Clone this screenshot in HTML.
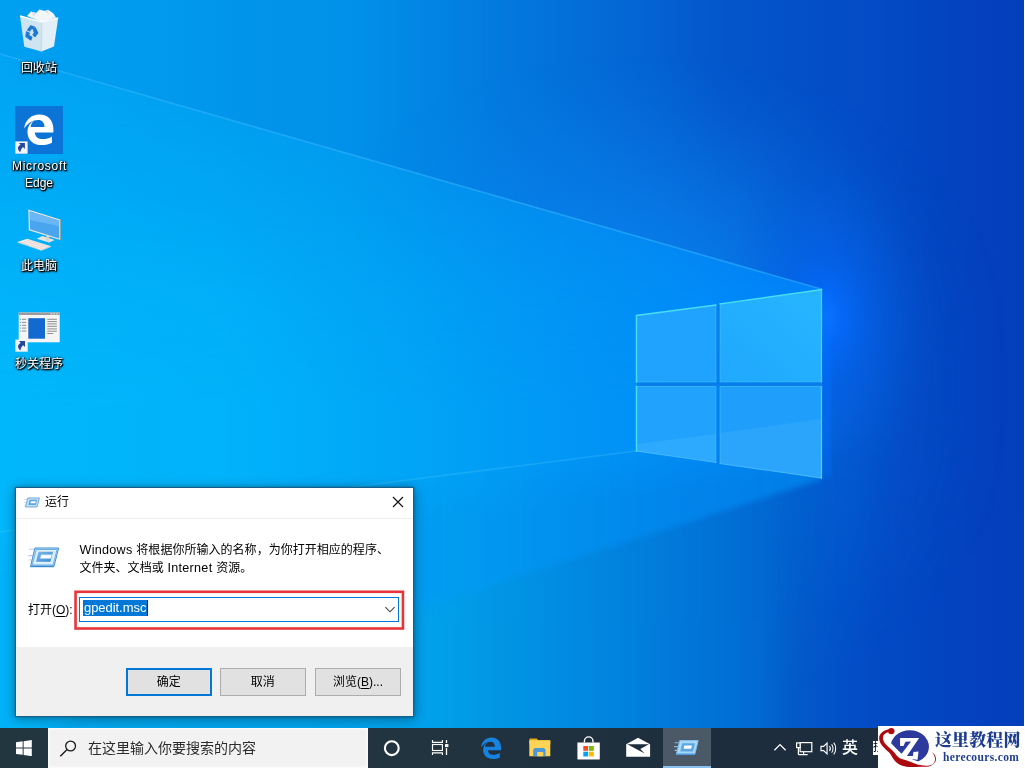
<!DOCTYPE html>
<html lang="zh-CN">
<head>
<meta charset="utf-8">
<title>运行 - gpedit.msc</title>
<style>
*{box-sizing:border-box;margin:0;padding:0}
html,body{width:1025px;height:769px;overflow:hidden;background:#fff}
body{position:relative;font-family:"Liberation Sans","Noto Sans CJK SC",sans-serif;font-size:12px;color:#000}
#desk{will-change:transform;opacity:.999;position:absolute;left:0;top:0;width:1024px;height:768px;overflow:hidden;background:#0a8bea}
#wall{position:absolute;left:0;top:0;width:1024px;height:768px;display:block}
/* desktop icons */
.ico{position:absolute;width:76px;text-align:center;color:#fff;font-size:12px;line-height:17px;
 text-shadow:1px 1px 1.500px rgba(0,0,0,1),0 1px 2px rgba(0,0,0,.95),0 0 3px rgba(0,0,0,.85),1px 1px 1px rgba(0,0,0,.8)}
.ico svg{display:block;position:absolute}
.ico span{position:absolute;left:0;width:76px;display:block;white-space:nowrap}
.btn{position:absolute;top:180px;height:27.500px;border:1px solid #adadad;background:#e1e1e1;text-align:center;font-size:12px;line-height:26px;white-space:nowrap;color:#000}
.lt{font-size:12.600px;letter-spacing:.280px}
</style>
</head>
<body>
<div id="desk">
<svg id="wall" width="1024" height="768" viewBox="0 0 1024 768">
<defs>
  <!-- ambient (outside the light wedge), far-from-window values -->
  <linearGradient id="gTop" x1="0" y1="0" x2="1024" y2="0" gradientUnits="userSpaceOnUse">
    <stop offset="0" stop-color="#00a0f1"/>
    <stop offset="0.117" stop-color="#009cef"/>
    <stop offset="0.25" stop-color="#0094eb"/>
    <stop offset="0.342" stop-color="#0091ea"/>
    <stop offset="0.49" stop-color="#0379de"/>
    <stop offset="0.635" stop-color="#0463d2"/>
    <stop offset="0.71" stop-color="#0455ca"/>
    <stop offset="0.83" stop-color="#034dc7"/>
    <stop offset="0.955" stop-color="#0441be"/>
    <stop offset="1" stop-color="#043fbb"/>
  </linearGradient>
  <!-- ambient, lower part (floor outside the wedge) -->
  <linearGradient id="gBot" x1="0" y1="0" x2="1024" y2="0" gradientUnits="userSpaceOnUse">
    <stop offset="0" stop-color="#00a8ee"/>
    <stop offset="0.35" stop-color="#00a3ec"/>
    <stop offset="0.43" stop-color="#00a0eb"/>
    <stop offset="0.49" stop-color="#0095e4"/>
    <stop offset="0.585" stop-color="#0086e0"/>
    <stop offset="0.685" stop-color="#0074d8"/>
    <stop offset="0.742" stop-color="#006ad2"/>
    <stop offset="0.78" stop-color="#035dc8"/>
    <stop offset="0.83" stop-color="#0355ca"/>
    <stop offset="0.94" stop-color="#0442ba"/>
    <stop offset="1" stop-color="#043fb8"/>
  </linearGradient>
  <!-- broad glow around the window -->
  <radialGradient id="gBroad" cx="0" cy="0" r="1" gradientUnits="userSpaceOnUse" gradientTransform="translate(640 385) scale(400 330)">
    <stop offset="0" stop-color="#0a8cf6" stop-opacity="0.78"/>
    <stop offset="0.3" stop-color="#0a8cf6" stop-opacity="0.70"/>
    <stop offset="0.5" stop-color="#0a8cf6" stop-opacity="0.52"/>
    <stop offset="0.7" stop-color="#0a8cf6" stop-opacity="0.28"/>
    <stop offset="0.85" stop-color="#0a8cf6" stop-opacity="0.11"/>
    <stop offset="1" stop-color="#0a8cf6" stop-opacity="0"/>
  </radialGradient>
  <linearGradient id="gBroadMaskG" x1="0" y1="0" x2="1024" y2="0" gradientUnits="userSpaceOnUse">
    <stop offset="0" stop-color="#fff"/>
    <stop offset="0.72" stop-color="#fff"/>
    <stop offset="0.88" stop-color="#404040"/>
    <stop offset="1" stop-color="#000"/>
  </linearGradient>
  <mask id="mBroad"><rect width="1024" height="768" fill="url(#gBroadMaskG)"/></mask>
  <!-- light wedge -->
  <linearGradient id="gWedge" x1="0" y1="0" x2="1024" y2="0" gradientUnits="userSpaceOnUse">
    <stop offset="0" stop-color="#00b7fb"/>
    <stop offset="0.215" stop-color="#00b3fa"/>
    <stop offset="0.40" stop-color="#00a5f7"/>
    <stop offset="0.49" stop-color="#009cf5"/>
    <stop offset="0.585" stop-color="#0094f6"/>
    <stop offset="0.70" stop-color="#008cfb"/>
    <stop offset="0.80" stop-color="#0688fd"/>
  </linearGradient>
  <!-- wedge opacity grows from its upper edge downward -->
  <linearGradient id="gWedgeMaskG" x1="0" y1="0" x2="0" y2="768" gradientUnits="userSpaceOnUse">
    <stop offset="0.07" stop-color="#262626"/>
    <stop offset="0.26" stop-color="#8c8c8c"/>
    <stop offset="0.39" stop-color="#d9d9d9"/>
    <stop offset="0.53" stop-color="#fff"/>
    <stop offset="1" stop-color="#fff"/>
  </linearGradient>
  <mask id="mWedge"><rect width="1024" height="768" fill="url(#gWedgeMaskG)"/></mask>
  <!-- floor (lower part of the wedge) shading -->
  <linearGradient id="gFloor" x1="0" y1="0" x2="1024" y2="0" gradientUnits="userSpaceOnUse">
    <stop offset="0" stop-color="#0070c8" stop-opacity="0.04"/>
    <stop offset="0.47" stop-color="#0070c8" stop-opacity="0.10"/>
    <stop offset="0.585" stop-color="#0070c8" stop-opacity="0.20"/>
    <stop offset="0.72" stop-color="#0070c8" stop-opacity="0.36"/>
    <stop offset="0.80" stop-color="#0070c8" stop-opacity="0.42"/>
  </linearGradient>
  <radialGradient id="gGlow" cx="0" cy="0" r="1" gradientUnits="userSpaceOnUse" gradientTransform="translate(826 318) scale(112 175)">
    <stop offset="0" stop-color="#0c74ff" stop-opacity="1"/>
    <stop offset="0.15" stop-color="#0468f8" stop-opacity="0.92"/>
    <stop offset="0.4" stop-color="#0462ee" stop-opacity="0.52"/>
    <stop offset="0.7" stop-color="#0460e8" stop-opacity="0.2"/>
    <stop offset="1" stop-color="#0356dd" stop-opacity="0"/>
  </radialGradient>
  <linearGradient id="gBotMaskG" x1="0" y1="0" x2="1024" y2="0" gradientUnits="userSpaceOnUse">
    <stop offset="0" stop-color="#fff"/>
    <stop offset="0.74" stop-color="#fff"/>
    <stop offset="0.87" stop-color="#000"/>
  </linearGradient>
  <mask id="mBot"><rect width="1024" height="768" fill="url(#gBotMaskG)"/></mask>
  <clipPath id="cpLeft"><rect x="0" y="0" width="822" height="768"/></clipPath>
  <linearGradient id="gPaneTR" x1="0" y1="1" x2="1" y2="0"><stop offset="0" stop-color="#20a8fd"/><stop offset="1" stop-color="#27b5ff"/></linearGradient>
  <linearGradient id="gFloorMaskG" x1="318" y1="489" x2="324" y2="536" gradientUnits="userSpaceOnUse">
    <stop offset="0" stop-color="#303030"/>
    <stop offset="0.2" stop-color="#505050"/>
    <stop offset="1" stop-color="#fff"/>
  </linearGradient>
  <mask id="mFloor"><rect width="1024" height="768" fill="url(#gFloorMaskG)"/></mask>
  <filter id="b8" x="-5%" y="-5%" width="110%" height="110%"><feGaussianBlur stdDeviation="8"/></filter>
  <filter id="b3" x="-5%" y="-5%" width="110%" height="110%"><feGaussianBlur stdDeviation="3"/></filter>
  <filter id="b1"><feGaussianBlur stdDeviation="0.7"/></filter>
</defs>
<!-- ambient -->
<rect width="1024" height="768" fill="url(#gTop)"/>
<rect width="1024" height="768" fill="url(#gBroad)" mask="url(#mBroad)"/>
<!-- lower ambient -->
<g mask="url(#mBot)">
<polygon points="0,560 400,520 822,450 1024,450 1024,768 0,768" fill="url(#gBot)" filter="url(#b8)"/>
<rect x="0" y="620" width="1024" height="148" fill="url(#gBot)"/>
</g>
<!-- glow to the right of the window -->
<rect x="700" y="130" width="324" height="380" fill="url(#gGlow)"/>
<rect x="822" y="292" width="9" height="184" fill="#0a70ff" fill-opacity=".5" filter="url(#b3)"/>
<!-- light wedge -->
<g clip-path="url(#cpLeft)">
  <!-- floor part (soft lower edge) -->
  <polygon points="-20,470 640,400 840,420 840,472 -20,751" fill="url(#gWedge)" filter="url(#b3)"/>
  <g mask="url(#mFloor)"><polygon points="-20,470 640,400 840,420 840,472 -20,751" fill="url(#gFloor)" filter="url(#b3)"/></g>
  <!-- air part -->
  <g filter="url(#b1)">
    <polygon points="-2,53.400 822,289 822,478 636,451 -2,532" fill="url(#gWedge)" mask="url(#mWedge)"/>
  </g>
</g>
<!-- beam edge lines -->
<line x1="0" y1="54" x2="821" y2="289" stroke="#38b8ff" stroke-opacity="0.5" stroke-width="1.6" filter="url(#b1)"/>
<line x1="636" y1="451" x2="0" y2="532" stroke="#6ad4ff" stroke-opacity="0.22" stroke-width="1.6" filter="url(#b1)"/>
<!-- window panes -->
<g>
  <polygon points="636.5,315.5 716,305 716,382 636.5,382" fill="#20a3fe"/>
  <polygon points="720,304 821.5,289.5 821.5,382 720,382" fill="url(#gPaneTR)"/>
  <polygon points="636.5,386.5 716,386.5 716,462.5 636.5,451" fill="#20a2fd"/>
  <polygon points="720,386.5 821.5,386.5 821.5,478 720,463.5" fill="#1f9ffb"/>
</g>
<g fill="none" stroke-linecap="square">
  <!-- inner and bottom edges: soft -->
  <path d="M716 305V382H636.500M720 304V382H821.500M636.500 386.500H716V462.500M720 463.500V386.500H821.500" stroke="#4cc6f8" stroke-opacity=".55" stroke-width="1"/>
  <path d="M636.500 451L716 462.500M720 463.500L821.500 478" stroke="#62ccff" stroke-opacity=".6" stroke-width="1.200"/>
  <!-- outer bright edges -->
  <path d="M636.500 382V315.500L716 305M636.500 451V386.500M720 304L821.500 289.500" stroke="#48dcee" stroke-width="1.500"/>
  <path d="M821.500 289.500V382M821.500 386.500V478" stroke="#48dcee" stroke-opacity=".9" stroke-width="1.300"/>
</g>
<!-- darker gaps between panes -->
<rect x="637" y="382.600" width="184.500" height="3.400" fill="#0a7ce6" opacity="0.9"/>
<rect x="716.600" y="304" width="2.800" height="160" fill="#0a7ce6" opacity="0.6"/>
<!-- subtle highlight inside bottom panes -->
<polygon points="637,444 716,434 716,462 637,451" fill="#6fd0ff" fill-opacity="0.17"/>
<polygon points="720,433 821,419 821,478 720,463" fill="#6fd0ff" fill-opacity="0.14"/>
</svg>

<!-- Recycle bin -->
<div class="ico" style="left:1px;top:0;height:80px">
  <svg style="left:17px;top:7px" width="44" height="46" viewBox="0 0 44 46">
    <!-- crumpled paper -->
    <path d="M9 9L13 4.500 18 6 21.500 2.500 27 4 30 2.800 35 6 38 10.500 24 15z" fill="#f3f6f9"/>
    <path d="M13 4.500L18 6 16 10zM27 4L30 2.800 31 8z" fill="#d9e2ea"/>
    <!-- left face -->
    <path d="M2 9L24 15 23.500 44.500 6.300 39.800z" fill="#dfe9f1" fill-opacity=".93"/>
    <!-- right face -->
    <path d="M24 15L40.200 10.800 36 39.500 23.500 44.500z" fill="#eef3f7" fill-opacity=".95"/>
    <!-- rim -->
    <path d="M2 9L24 15 40.200 10.800" fill="none" stroke="#fbfdff" stroke-width="1.300"/>
    <path d="M24 15L23.500 44.500" stroke="#cfdbe5" stroke-width=".800"/>
    <!-- recycle symbol -->
    <g fill="#1b78d3" stroke="#1b78d3" stroke-width="1" stroke-linejoin="round" transform="translate(13.300 25.800) scale(1.050)">
      <path d="M-3.600 -2.600L-0.600 -6.600 3 -5.600 1.800 -3.600 0 -4.200 -1.400 -1.600z"/>
      <path d="M3.800 -4.800L6.200 0.200 3.600 3.600 1.600 2 3 0 2 -2.600z"/>
      <path d="M-4.600 -1L-1.800 .400 -2.600 2.200 .600 4.200 -.400 6.800 -5.200 3.600z"/>
    </g>
  </svg>
  <span style="top:59.500px">回收站</span>
</div>
<!-- Microsoft Edge -->
<div class="ico" style="left:1px;top:100px;height:95px">
  <svg style="left:14px;top:6px" width="48" height="48" viewBox="0 0 48 48">
    <rect width="48" height="48" fill="#0b74d6"/>
    <path d="M9.200 22.600C10.200 13.800 16.600 8.600 24.400 8.600c8.600 0 14 6 14 14.800v3H19.800c.300 4.300 3.500 6.700 8 6.700 3.300 0 6.400-.900 9.200-2.700v6.300c-2.900 1.600-6.300 2.400-10.200 2.400-8.700 0-14.300-5.200-14.300-13.200 0-4.900 2.500-9.200 6.700-11.600-2.100 1.800-3.300 4.400-3.600 6.800h13.900c0-4.500-2.300-7.200-6.300-7.200-5.400 0-10.700 3.300-14 8.700z" fill="#fff"/>
    <!-- shortcut overlay -->
    <g transform="translate(.300 35.400)"><rect width="12.300" height="12.300" fill="#f3f6f9"/>
    <path d="M3.600 1.500H9.600V7.500L7.700 5.700C6.300 7 5.400 8.600 5 10.900 3.400 9.600 2.400 8 2.700 6.400 3 4.900 4 3.800 5.300 3.300z" fill="#27479c"/></g>
  </svg>
  <span style="top:57.500px;letter-spacing:.700px;left:.500px">Microsoft</span>
  <span style="top:75px">Edge</span>
</div>
<!-- This PC -->
<div class="ico" style="left:1px;top:200px;height:80px">
  <svg style="left:15px;top:8px" width="46" height="44" viewBox="0 0 46 44">
    <!-- keyboard -->
    <path d="M1.400 34.100L11.200 30.700 35.200 38.300 25.300 42.300z" fill="#f3f0ee"/>
    <path d="M4.600 34.200L28.600 41.200M7.800 33L31.800 40M11 31.900L34 39" stroke="#e3c9c4" stroke-width=".700" fill="none"/>
    <path d="M1.400 34.100L25.300 42.300 35.200 38.300" stroke="#cfd6dc" stroke-width=".800" fill="none"/>
    <!-- stand -->
    <path d="M20.600 30.700L26.300 27.900 38.800 32 33.100 34.500z" fill="#e7e3df"/>
    <path d="M30.600 26.500L33.400 27.400 32.600 33.200 30 32.300z" fill="#d9d2cc"/>
    <!-- monitor frame -->
    <path d="M12.300 1.400L44.200 11.500V32.100L12.800 22.300z" fill="#e9e4de"/>
    <path d="M44.200 11.500V32.100" stroke="#b9a58f" stroke-width="1"/>
    <!-- screen -->
    <path d="M13.600 3.200L43 12.500V30.400L14 21.300z" fill="#4aa5ef"/>
    <path d="M13.600 3.200L43 12.500V18L13.800 12z" fill="#74bdf6" fill-opacity=".75"/>
  </svg>
  <span style="top:57.500px">此电脑</span>
</div>
<!-- 秒关程序 -->
<div class="ico" style="left:1px;top:300px;height:80px">
  <svg style="left:14px;top:12px" width="48" height="41" viewBox="0 0 48 41">
    <rect x="3.700" y=".500" width="41" height="29.800" fill="#f5f5f5"/>
    <rect x="3.700" y=".500" width="41" height="2.500" fill="#9b9b9b"/>
    <rect x="35.500" y="1.200" width="1.600" height="1.200" fill="#e0e0e0"/><rect x="38.400" y="1.200" width="1.600" height="1.200" fill="#e0e0e0"/><rect x="41.300" y="1.200" width="1.600" height="1.200" fill="#e0e0e0"/>
    <rect x="13.300" y="6.200" width="16.700" height="20.500" fill="#1469d0"/>
    <path d="M32.300 7.300H41.900M32.300 9.600H41.900M32.300 11.900H41.900M32.300 14.300H41.900M32.300 16.900H41.900M32.300 19.200H41.900M32.300 21.500H38.200" stroke="#8e8e8e" stroke-width="1"/>
    <path d="M6.900 7.300H11.200M6.900 10.400H11.200M6.900 13.300H11.200M6.900 16.100H11.200M6.900 19H11.200" stroke="#8e8e8e" stroke-width="1"/>
    <path d="M5.200 7.300H6M5.200 10.400H6M5.200 13.300H6M5.200 16.100H6M5.200 19H6" stroke="#5a7fb8" stroke-width="1"/>
    <!-- shortcut overlay -->
    <g transform="translate(.400 27.600)"><rect width="12.300" height="12.100" fill="#f3f6f9"/>
    <path d="M3.600 1.500H9.600V7.500L7.700 5.700C6.300 7 5.400 8.600 5 10.900 3.400 9.600 2.400 8 2.700 6.400 3 4.900 4 3.800 5.300 3.300z" fill="#27479c"/></g>
  </svg>
  <span style="top:56px">秒关程序</span>
</div>

<div id="dlg" style="position:absolute;left:15px;top:487px;width:399px;height:230px;border:1px solid #155f8a;background:#fff;box-shadow:0 2px 11px 1px rgba(0,0,0,.30),0 0 3px rgba(0,0,0,.28);">
  <!-- title bar -->
  <svg style="position:absolute;left:8px;top:8.500px" width="16.500" height="11.500" viewBox="0 0 17 12">
    <path d="M.400 2.600H3.200M0 5.800H2.400M.400 8.400H1.800" stroke="#bcd2e6" stroke-width=".800"/>
    <path d="M3.900 1H16L13.500 10.400H1.400z" fill="#c4e2f8" stroke="#5a9fdc" stroke-width=".900"/>
    <path d="M5.800 2.900H13.600L12.200 8.400H4.400z" fill="#5fa5e0"/>
    <path d="M7.200 4.400H12.200L11.600 6.600H6.600z" fill="#fff"/>
  </svg>
  <span style="position:absolute;left:29px;top:6px;font-size:12px;line-height:17px;white-space:nowrap">运行</span>
  <svg style="position:absolute;left:376px;top:8px" width="12" height="12" viewBox="0 0 12 12">
    <path d="M1 1L11 11M11 1L1 11" stroke="#111" stroke-width="1.150" fill="none"/>
  </svg>
  <div style="position:absolute;left:0;top:30px;width:397px;height:1px;background:#ededed"></div>
  <!-- big run icon -->
  <svg style="position:absolute;left:12px;top:58.500px" width="32" height="22" viewBox="0 0 32 22">
    <defs><linearGradient id="gRunIn" x1="0" y1="0" x2="1" y2="1"><stop offset="0" stop-color="#7db8ea"/><stop offset="1" stop-color="#3a88d4"/></linearGradient></defs>
    <path d="M.800 2.200H6.600M.200 8.600H4.800M.800 13H3.800" stroke="#b9cfe2" stroke-width="1.100"/>
    <path d="M6.930 1H30.640L25.960 19.450H2.540z" fill="#bfe0f8" stroke="#3f8fd6" stroke-width="1"/>
    <path d="M8.300 2.500H29L25 18H4.200z" fill="#dbeffc" stroke="#5aa2de" stroke-width=".800"/>
    <path d="M10.440 4.800H25.080L22.450 14.760H8z" fill="url(#gRunIn)"/>
    <path d="M13.200 7.700H23.800L22.700 11.600H12.200z" fill="#fff" stroke="#a8d0f0" stroke-width=".600"/>
    <path d="M2.540 19.450H25.960" stroke="#3a88d4" stroke-width="1.500"/>
  </svg>
  <!-- description -->
  <div style="position:absolute;left:63.500px;top:54.400px;width:325px;font-size:12px;line-height:17.600px;white-space:nowrap;color:#000;letter-spacing:.030px;word-spacing:.400px">
    <div><span class="lt">Windows</span> 将根据你所输入的名称，为你打开相应的程序、</div>
    <div>文件夹、文档或 <span class="lt">Internet</span> 资源。</div>
  </div>
  <!-- open label -->
  <span style="position:absolute;left:12px;top:114px;font-size:12px;line-height:17px;white-space:nowrap">打开(<span style="text-decoration:underline;text-underline-offset:1.500px">O</span>):</span>
  <!-- red highlight -->
  <svg style="position:absolute;left:57px;top:101px" width="334" height="43" viewBox="0 0 334 43"><rect x="2.550" y="2.800" width="327.400" height="36.700" fill="none" stroke="#e8353b" stroke-width="2.600"/></svg>
  <!-- combobox -->
  <div style="position:absolute;left:63px;top:109px;width:319.500px;height:24.500px;border:1px solid #0078d7;background:#fff">
    <span style="position:absolute;left:3px;top:2px;height:16.400px;padding:0 1px 0 1px;background:#0078d7;color:#fff;font-size:13px;line-height:16.400px;white-space:nowrap;letter-spacing:-0.050px;border-right:1px solid #222">gpedit.msc</span>
    <svg style="position:absolute;left:304px;top:7px" width="12" height="9" viewBox="0 0 12 9">
      <path d="M1.400 2.200L6 6.800 10.600 2.200" fill="none" stroke="#444" stroke-width="1.100"/>
    </svg>
  </div>
  <!-- footer -->
  <div style="position:absolute;left:0;top:159px;width:397px;height:69px;background:#f0f0f0"></div>
  <div class="btn" style="left:110px;width:85.500px;border:2px solid #0078d7;line-height:24px">确定</div>
  <div class="btn" style="left:204px;width:85.500px">取消</div>
  <div class="btn" style="left:299px;width:86px">浏览(<span style="text-decoration:underline;text-underline-offset:1.500px">B</span>)...</div>
</div>

<div id="taskbar" style="position:absolute;left:0;top:728px;width:1024px;height:40px;background:linear-gradient(90deg,#223640 0,#21343f 40%,#1d2d3d 70%,#1d2d3d 100%);">
  <!-- start -->
  <svg style="position:absolute;left:16px;top:12px" width="16.400" height="16.400" viewBox="0 0 17 17">
    <polygon points="0,2.3 6.9,1.3 6.9,7.9 0,7.9" fill="#fff"/>
    <polygon points="7.9,1.2 16.4,0 16.4,7.9 7.9,7.9" fill="#fff"/>
    <polygon points="0,8.9 6.9,8.9 6.9,15.4 0,14.4" fill="#fff"/>
    <polygon points="7.9,8.9 16.4,8.9 16.4,16.8 7.9,15.6" fill="#fff"/>
  </svg>
  <!-- search box -->
  <div style="position:absolute;left:48px;top:0;width:320px;height:40px;background:#f2f2f2;box-shadow:inset 0 0 0 1.500px #fafafa;">
    <svg style="position:absolute;left:10px;top:10px" width="22" height="22" viewBox="0 0 22 22">
      <circle cx="12.6" cy="8" r="4.9" fill="none" stroke="#1a1a1a" stroke-width="1.3"/>
      <line x1="9.1" y1="11.6" x2="2.3" y2="18.3" stroke="#1a1a1a" stroke-width="1.4"/>
    </svg>
    <span style="position:absolute;left:40px;top:10px;font-size:14px;line-height:20px;color:#2b2b2b;white-space:nowrap;letter-spacing:0px">在这里输入你要搜索的内容</span>
  </div>
  <!-- cortana -->
  <svg style="position:absolute;left:381px;top:9px" width="22" height="22" viewBox="0 0 22 22">
    <circle cx="10.8" cy="11.2" r="6.9" fill="none" stroke="#fff" stroke-width="2.1"/>
  </svg>
  <!-- task view -->
  <svg style="position:absolute;left:430px;top:10px" width="20" height="20" viewBox="0 0 20 20" fill="none" stroke="#fff" stroke-width="1.150">
    <path d="M2.500 2.100V4.400H12.400V2.100"/>
    <rect x="2.500" y="6.500" width="9.900" height="6"/>
    <path d="M2.500 17.100V14.900H12.400V17.100"/>
    <path d="M16.500 2.100V4.900M16.500 10V17.100" stroke-width="1.300"/>
    <rect x="15" y="6.100" width="3.400" height="3" fill="#fff" stroke="none"/>
  </svg>
  <!-- edge -->
  <svg style="position:absolute;left:479px;top:8px" width="24" height="24" viewBox="0 0 24 24">
    <path d="M2 11.6C2.6 5.6 7 1.6 12.5 1.6c5.8 0 9.6 4.200 9.6 10.200v2.400H9c.1 2.900 2.300 4.700 5.500 4.700 2.300 0 4.400-.600 6.300-1.800v4.300c-2 1.100-4.300 1.600-6.900 1.600-5.800 0-9.800-3.600-9.800-9.200 0-3.300 1.600-6.200 4.500-7.800-1.500 1.300-2.300 3.100-2.500 4.700h9.800c0-3.100-1.600-5-4.400-5-3.700 0-7.300 2.300-9.500 5.900z" fill="#1683e3"/>
  </svg>
  <!-- explorer -->
  <svg style="position:absolute;left:528px;top:9px" width="24" height="22" viewBox="0 0 24 22">
    <path d="M1.300 2.500c0-.500.400-.900.900-.900h6.600l1.400 1.600h12.100v4H1.300z" fill="#e6a817"/>
    <path d="M1.300 4.200c0-.500.400-.900.900-.900h19.200c.500 0 .900.400.900.900v15H1.300z" fill="#ffd356"/>
    <path d="M5.200 13.200c0-1.200 1-2.200 2.200-2.200h7.900c1.200 0 2.200 1 2.200 2.200v6H5.200z" fill="#4a97dc"/>
    <path d="M9.200 15.800c0-.500.400-.900.900-.900h4.300c.500 0 .900.400.900.900v3.400H9.200z" fill="#ffd356"/>
  </svg>
  <!-- store -->
  <svg style="position:absolute;left:576px;top:7px" width="26" height="26" viewBox="0 0 26 26">
    <path d="M8.400 7.600V6.200a4.300 4.300 0 0 1 8.600 0v1.400" fill="none" stroke="#fff" stroke-width="1.400"/>
    <path d="M1.400 7.400h22.400v16.300c0 .500-.400.900-.900.900H2.300c-.500 0-.900-.400-.900-.900z" fill="#fff"/>
    <rect x="7.300" y="11" width="4.800" height="4.800" fill="#f25022"/>
    <rect x="13" y="11" width="4.800" height="4.800" fill="#7fba00"/>
    <rect x="7.300" y="16.700" width="4.800" height="4.800" fill="#00a4ef"/>
    <rect x="13" y="16.700" width="4.800" height="4.800" fill="#ffb900"/>
  </svg>
  <!-- mail -->
  <svg style="position:absolute;left:625px;top:8px" width="27" height="24" viewBox="0 0 27 24">
    <path d="M1.200 8.300L13.100 1.800 25.100 8.300V20.800H1.200z" fill="#fff"/>
    <path d="M2.300 8.200H23.900L15.300 13.100 19.700 17.600z" fill="#1d2d3d"/>
  </svg>
  <!-- run (active) -->
  <div style="position:absolute;left:663px;top:0;width:48px;height:40px;background:#4b5966"></div>
  <div style="position:absolute;left:663px;top:38px;width:48px;height:2px;background:#86c1f0"></div>
  <svg style="position:absolute;left:674px;top:11px" width="26" height="18" viewBox="0 0 26 18">
    <path d="M.600 3.800H5.200M0 7.600H4.200M.600 11.400H3.200" stroke="#8db4d6" stroke-width="1.100"/>
    <path d="M5.800 1.600H24.200L20.800 15.200H2.400z" fill="#a9d9f8" stroke="#7cc0f0" stroke-width="1"/>
    <path d="M8.200 4.200H21L19 12.400H6.200z" fill="#5ea6e2"/>
    <path d="M10.400 6.400H18L17.100 9.800H9.600z" fill="#fff"/>
    <path d="M2.400 15.200H20.800" stroke="#4f9be0" stroke-width="1.400"/>
  </svg>
  <!-- tray -->
  <svg style="position:absolute;left:772px;top:12.200px" width="16" height="14" viewBox="0 0 16 14">
    <path d="M2.400 10.200L8 4.600 13.600 10.200" fill="none" stroke="#fff" stroke-width="1.300"/>
  </svg>
  <svg style="position:absolute;left:795px;top:10px" width="20" height="20" viewBox="0 0 20 20" fill="none" stroke="#fff" stroke-width="1.200">
    <rect x="5.100" y="4.600" width="11.700" height="9.100"/>
    <path d="M8.600 13.700V16.600M3.400 16.600H12.700M3.400 9.600V16.600"/>
    <rect x="1.600" y="4.900" width="3.500" height="4.700" fill="#1d2d3d"/>
  </svg>
  <svg style="position:absolute;left:818px;top:10.500px" width="20" height="19" viewBox="0 0 20 20" fill="none" stroke="#fff" stroke-width="1.200">
    <path d="M2.600 7.800H5.400L9 4.400V15.600L5.400 12.200H2.600z"/>
    <path d="M11.600 7.400c1 1.400 1 3.800 0 5.200M13.800 5.600c2 2.400 2 6.400 0 8.800M16 3.800c2.800 3.400 2.800 9 0 12.400" stroke-width="1.100"/>
  </svg>
  <span style="position:absolute;left:842px;top:10px;font-size:16px;line-height:20px;color:#fff;font-weight:500">英</span>
  <span style="position:absolute;left:873px;top:13px;width:12px;height:13.500px;background:#fff;color:#000;font-size:12px;line-height:13px;overflow:hidden">拼</span>
</div>

<div id="wm" style="position:absolute;left:878px;top:726px;width:147px;height:43px;background:#fff;overflow:hidden">
  <svg style="position:absolute;left:0;top:0" width="62" height="43" viewBox="0 0 62 43">
    <defs><clipPath id="cpDisc"><polygon points="11.500,15.400 16.750,21 23,27.250 29.250,31 35.500,33.800 43,36.600 46,37.400 62,43 62,0 0,0 0,4"/></clipPath></defs>
    <!-- blue disc, cut on the lower-left along a diagonal -->
    <ellipse cx="31.750" cy="20.700" rx="19.200" ry="16.500" fill="#2d3a9d" clip-path="url(#cpDisc)"/>
    <!-- Z letter -->
    <polygon points="22.060,11.940 41.130,11.940 28.940,30.060 34.880,30.060 35.500,25.880 40.500,25.380 39.560,33.810 33,32.880 25.500,31 23,28.500 33,15.500 27.380,15.690 25.500,20.060 22.060,20.060" fill="#fff"/>
    <!-- red swoosh -->
    <circle cx="13.300" cy="5.100" r="3.200" fill="#ad0a10"/>
    <path d="M13.300 3C6 3.600 1.200 7 1.100 12.250 1.200 15 2.400 17.600 4.250 19.750 6.400 22.300 9 24.600 11.130 26.600 13.400 29.400 14.600 32.400 16.750 34.750 18.800 37 21.400 38.800 24.250 39.750 27 40.700 30 41 33 41 36 41.100 39 40.900 41.750 40.700 45 40.600 48.200 40.800 51.100 40.400 53.600 39.800 55.600 38.400 56.750 36.600 57.600 35.400 58 34.200 58 32.900 57.900 31 57.200 29.300 56.100 27.900 55.500 27.100 54.700 26.400 53.900 25.900 55.600 28 57.200 30.600 57.060 33.500 56.900 35.600 55.900 37.400 54.250 38.500 52.400 39.500 50.200 39.800 48 39.750 45 39.700 42 39.200 39.250 38.500 37.100 37.800 35 36.900 33 36 31.100 35.300 29.200 34.700 27.400 34.100 25.500 33.600 23.600 33.100 21.750 32.250 19.300 30.400 17.400 27.800 15.500 25.400 13 23 10.200 21 8 18.500 6.300 16.800 5.100 14.600 4.900 12.250 4.800 10.900 5.300 9.600 6.100 8.500 7.300 7.300 8.900 6.700 10.500 6.300z" fill="#ad0a10"/>
  </svg>
  <span style="position:absolute;left:57px;top:3.600px;font-family:'Liberation Serif','Noto Serif CJK SC',serif;font-weight:900;font-size:17px;line-height:22px;color:#1f3d8f;white-space:nowrap;letter-spacing:0.100px">这里教程网</span>
  <span style="position:absolute;left:65px;top:23px;font-family:'Liberation Serif','Noto Serif CJK SC',serif;font-weight:700;font-size:11.500px;line-height:16px;color:#1f3d8f;white-space:nowrap;letter-spacing:0.350px">herecours.com</span>
</div>

</div>
</body>
</html>
